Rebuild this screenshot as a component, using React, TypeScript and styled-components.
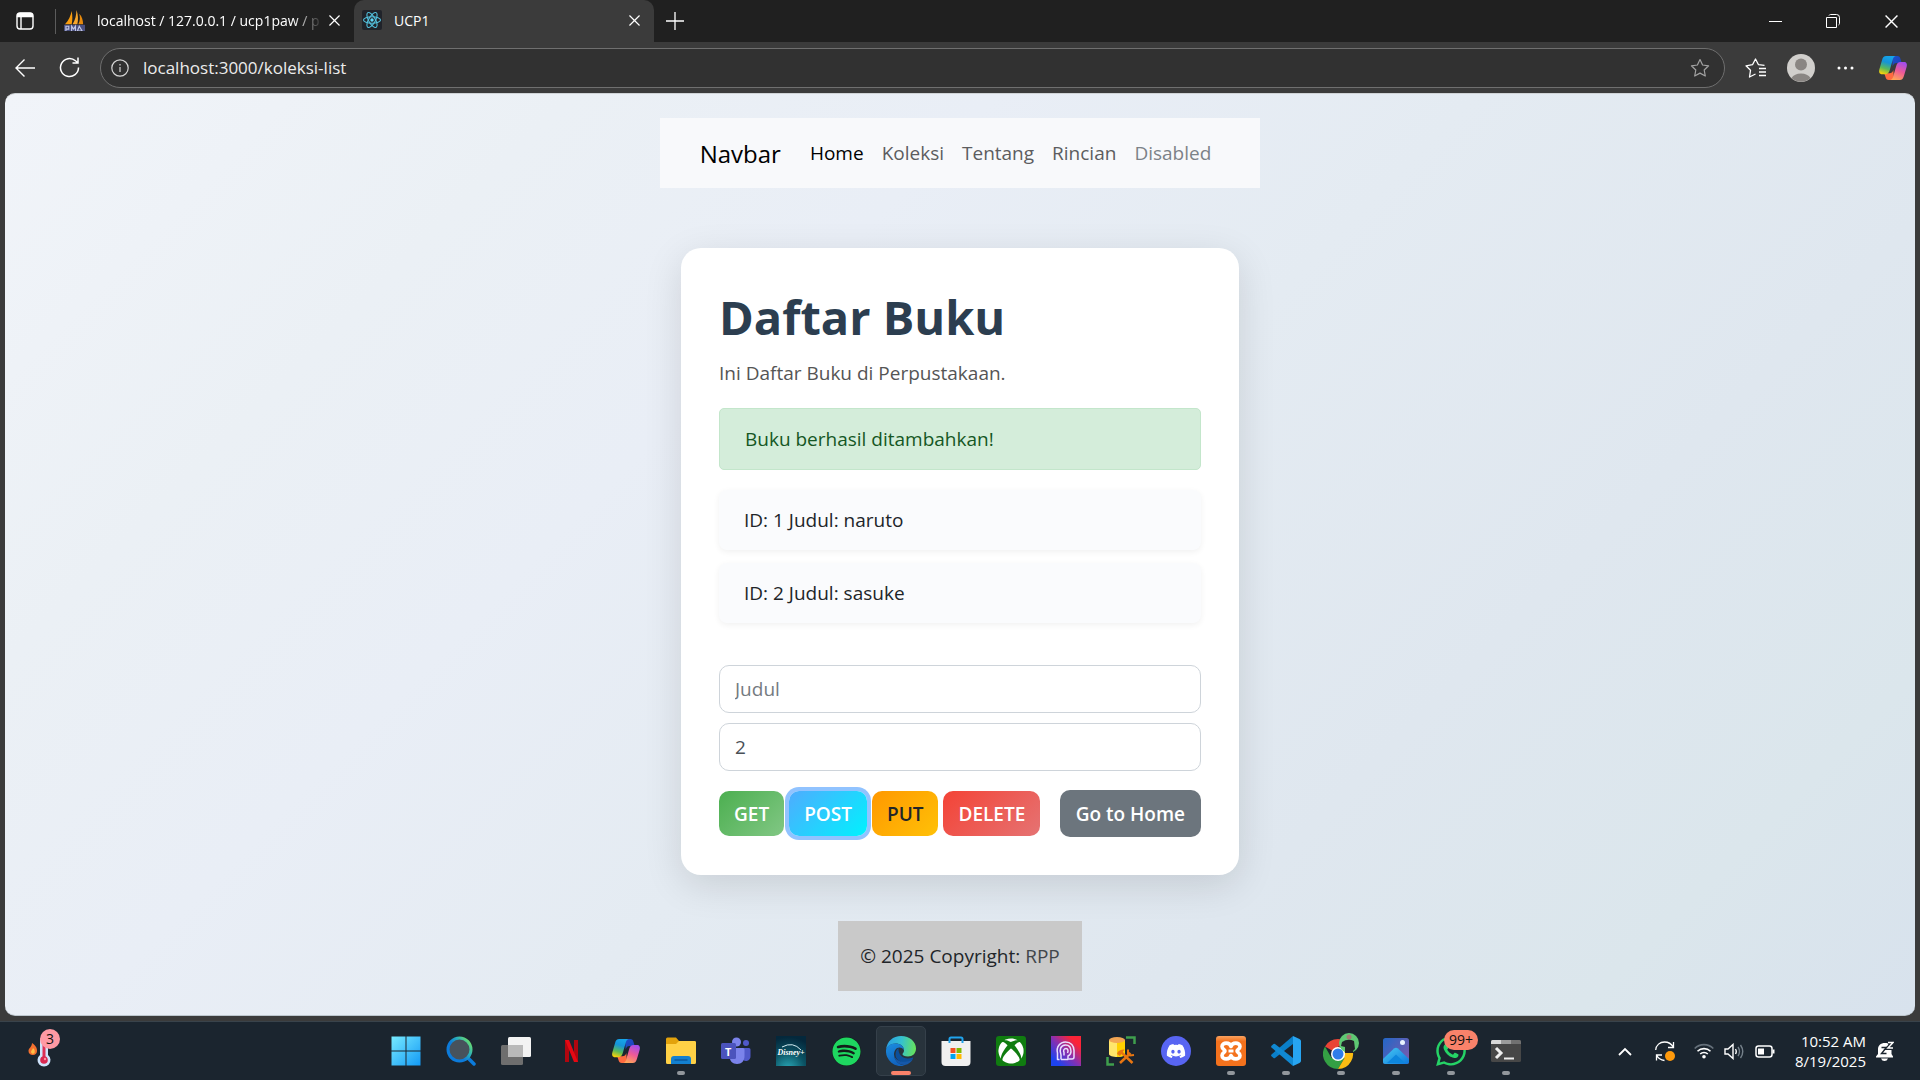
import React, { useId, useState } from "react";
import styled, { createGlobalStyle, css } from "styled-components";
import { FaSpotify, FaXbox, FaDiscord, FaWhatsapp } from "react-icons/fa";

const uiFont = `"Segoe UI", "Open Sans", "Noto Sans", sans-serif`;

const GlobalStyle = createGlobalStyle`
  *, *::before, *::after { box-sizing: border-box; }
  body { margin: 0; background: #3b3b3b; font-family: ${uiFont}; }
  button, input { font-family: inherit; }
  h1, p, ul { margin: 0; padding: 0; }
`;

/* ---------- browser window ---------- */

const Desktop = styled.div`
  min-height: 100vh;
  display: flex;
  flex-direction: column;
`;

const TabStrip = styled.header`
  display: flex;
  align-items: center;
  height: 42px;
  background: #202020;
  color: #fff;
`;

const PlainButton = styled.button`
  display: inline-flex;
  align-items: center;
  justify-content: center;
  padding: 0;
  border: 0;
  background: none;
  color: inherit;
  flex: none;
`;

const TabActions = styled(PlainButton)`
  width: 50px;
  height: 42px;
`;

const Divider = styled.span`
  width: 1px;
  height: 25px;
  margin-left: 5px;
  background: #5c5c5c;
`;

const Tab = styled.div<{ $active?: boolean }>`
  display: flex;
  align-items: center;
  gap: 4px;
  width: ${(p) => (p.$active ? 300 : 298)}px;
  height: 42px;
  padding: 0 10px 2px 8px;
  font-size: 14px;
  ${(p) =>
    p.$active &&
    css`
      background: #3b3b3b;
      border-radius: 10px 10px 0 0;
    `}
`;

const TabTitle = styled.span<{ $fade?: boolean }>`
  flex: 1;
  min-width: 0;
  margin-left: 8px;
  white-space: nowrap;
  ${(p) => p.$fade && "mask-image: linear-gradient(90deg, #000 88%, rgba(0, 0, 0, 0.1));"}
`;

const TabButton = styled(PlainButton)`
  width: 20px;
  height: 20px;
`;

const NewTab = styled(PlainButton)`
  width: 42px;
  height: 40px;
`;

const WindowControls = styled.div`
  display: flex;
  margin-left: auto;
`;

const WindowButton = styled(PlainButton)`
  width: 58px;
  height: 42px;
`;

const Toolbar = styled.div`
  display: flex;
  align-items: center;
  height: 51px;
  padding: 0 2px;
  background: #3b3b3b;
  color: #fff;
`;

const ToolButton = styled(PlainButton)<{ $wide?: boolean }>`
  width: ${(p) => (p.$wide ? 50 : 45)}px;
  height: 40px;
`;

const AddressBar = styled.label`
  display: flex;
  align-items: center;
  flex: 1;
  height: 40px;
  margin: 0 8px;
  padding: 0 14px 0 10px;
  gap: 14px;
  border: 1px solid #6f6f6f;
  border-radius: 20px;
  background: #313131;
`;

const AddressInput = styled.input`
  flex: 1;
  min-width: 0;
  padding: 0 0 1px;
  border: 0;
  outline: 0;
  background: none;
  color: #ececec;
  font-size: 17px;
`;

/* ---------- web page ---------- */

const Page = styled.div`
  flex: 1;
  display: flex;
  flex-direction: column;
  align-items: center;
  margin: 0 5px 5px;
  padding: 24px 20px;
  border-radius: 10px;
  border-top: 1px solid #cfd3d6;
  border-bottom: 1px solid #bcc6cd;
  background: linear-gradient(135deg, #f1f4f9 0%, #ebf0f5 20%, #e9eef6 35%, #e4ebf2 52%, #dfe7ef 72%, #dbe6ec 88%, #d8e2ed 100%);
  color: #212529;
`;

const Navbar = styled.nav`
  display: flex;
  align-items: center;
  height: 70px;
  padding: 0 40px;
  background: #f8f9fb;
`;

const Brand = styled.a`
  margin-right: 20px;
  color: #000;
  font-size: 24px;
  text-decoration: none;
`;

const NavItem = styled.a<{ $tone: "active" | "normal" | "muted" }>`
  padding: 10px 9px;
  font-size: 19px;
  line-height: 30px;
  text-decoration: none;
  color: ${(p) => ({ active: "#000", normal: "#5c5d5f", muted: "#7c8288" })[p.$tone]};
`;

const Card = styled.main`
  width: 558px;
  max-width: 100%;
  margin: 60px 0 46px;
  padding: 38px;
  border-radius: 20px;
  background: #fff;
  box-shadow: 0 10px 38px rgba(0, 0, 0, 0.12);
`;

const Title = styled.h1`
  margin-bottom: 10px;
  color: #2c3e50;
  font-size: 47px;
  font-weight: 700;
  line-height: 62px;
`;

const Lead = styled.p`
  color: #555;
  font-size: 19px;
  line-height: 30px;
`;

const Alert = styled.div`
  margin: 20px 0;
  padding: 15px 25px;
  border: 1px solid #c3e6cb;
  border-radius: 5px;
  background: #d4edda;
  color: #155724;
  font-size: 19px;
  line-height: 30px;
`;

const BookList = styled.ul`
  display: flex;
  flex-direction: column;
  gap: 13px;
  list-style: none;
`;

const Book = styled.li`
  padding: 15px 25px;
  border-radius: 8px;
  background: #fafbfd;
  box-shadow: 0 2px 6px rgba(0, 0, 0, 0.06);
  font-size: 19px;
  line-height: 30px;
`;

const Form = styled.form`
  display: flex;
  flex-direction: column;
  gap: 10px;
  margin-top: 42px;
`;

const TextField = styled.input`
  width: 100%;
  height: 48px;
  padding: 0 15px;
  border: 1px solid #ced4da;
  border-radius: 10px;
  background: #fff;
  color: #495057;
  font-size: 19px;
  &::placeholder {
    color: #757b81;
    opacity: 1;
  }
`;

const Actions = styled.div`
  display: flex;
  align-items: center;
  gap: 5px;
  margin-top: 9px;
`;

const ActionButton = styled.button<{ $fill: string; $dark?: boolean; $focus?: boolean; $last?: boolean }>`
  height: ${(p) => (p.$last ? 47 : 45)}px;
  margin-left: ${(p) => (p.$last ? "auto" : 0)};
  padding: 0 ${(p) => (p.$last ? 16 : 15)}px;
  border: 0;
  border-radius: 10px;
  background: ${(p) => p.$fill};
  color: ${(p) => (p.$dark ? "#212529" : "#fff")};
  font-size: 19px;
  font-weight: 600;
  white-space: nowrap;
  ${(p) => p.$focus && "box-shadow: 0 0 0 4px #91c3ff;"}
`;

const Footer = styled.footer`
  padding: 20px 22px;
  background: #c9c9c9;
  color: #212529;
  font-size: 19px;
  line-height: 30px;
  a {
    color: #41464b;
    text-decoration: none;
  }
`;

/* ---------- taskbar ---------- */

const Taskbar = styled.footer`
  display: grid;
  grid-template-columns: 1fr auto 1fr;
  align-items: center;
  height: 59px;
  padding-right: 8px;
  border-top: 1px solid #39434b;
  background: #1b252f;
  color: #fff;
`;

const Widgets = styled(PlainButton)`
  position: relative;
  justify-self: start;
  width: 36px;
  height: 44px;
  margin-left: 25px;
`;

const Count = styled.span<{ $wide?: boolean }>`
  position: absolute;
  top: ${(p) => (p.$wide ? 3 : 0)}px;
  right: ${(p) => (p.$wide ? -3 : 1)}px;
  min-width: 20px;
  height: 20px;
  padding: 0 ${(p) => (p.$wide ? 5 : 0)}px;
  border-radius: 10px;
  background: ${(p) => (p.$wide ? "#f9826a" : "#ff99a4")};
  color: #111;
  font-size: 14px;
  line-height: 20px;
  text-align: center;
`;

const Apps = styled.div`
  display: flex;
  gap: 5px;
`;

const AppButton = styled(PlainButton)<{ $state?: "open" | "active" }>`
  position: relative;
  width: 50px;
  height: 50px;
  border-radius: 5px;
  border: 1px solid ${(p) => (p.$state === "active" ? "#35404a" : "transparent")};
  ${(p) => p.$state === "active" && "background: #28333c;"}
  &::after {
    content: "";
    display: ${(p) => (p.$state ? "block" : "none")};
    position: absolute;
    bottom: 0;
    left: 50%;
    width: ${(p) => (p.$state === "active" ? 20 : 8)}px;
    height: 4px;
    border-radius: 2px;
    transform: translateX(-50%);
    background: ${(p) => (p.$state === "active" ? "#f9826a" : "#92979c")};
  }
`;

const Tray = styled.div`
  display: flex;
  align-items: center;
  justify-self: end;
  padding-right: 8px;
`;

const TrayButton = styled(PlainButton)<{ $w: number }>`
  width: ${(p) => p.$w}px;
  height: 44px;
`;

const Clock = styled.time`
  margin-left: 10px;
  font-size: 15px;
  line-height: 20px;
  text-align: right;
`;

/* ---------- drawings ---------- */

const Cross = ({ size = 11 }: { size?: number }) => (
  <svg width={size} height={size} viewBox="0 0 12 12" stroke="#fff" strokeWidth="1.3" fill="none">
    <path d="M.5.5l11 11M11.5.5l-11 11" />
  </svg>
);

const TabActionsIcon = () => (
  <svg width="18" height="18" viewBox="0 0 18 18" fill="none" stroke="#fff" strokeWidth="1.4">
    <rect x="1" y="1" width="16" height="16" rx="3" />
    <path d="M1.5 4.5V4A2.5 2.5 0 0 1 4 1.500h10A2.500 2.500 0 0 1 16.500 4v.5z" fill="#fff" />
    <path d="M5 5v12" />
  </svg>
);

const SailIcon = () => (
  <svg width="21" height="21" viewBox="0 0 22 22">
    <path d="M8 1c1 5 1 10 0 14H1C5 11 7 6 8 1z" fill="#f89c0e" />
    <path d="M13 0c2 5 2 10 1 15H9c3-5 4-10 4-15z" fill="#f7a62c" />
    <path d="M16 4c3 3 4 7 4 11h-5c2-4 2-7 1-11z" fill="#e6890c" />
    <path d="M0 15.500h22v6.500H0z" fill="#4a5080" />
    <path d="M2 22v-5h3v3H2M8 22v-5l2 3 2-3v5M14 22l2-5 3 5z" fill="none" stroke="#c3c8e6" strokeWidth="1.2" />
  </svg>
);

const ReactFavicon = () => (
  <svg width="20" height="20" viewBox="0 0 20 20">
    <rect width="20" height="20" rx="2" fill="#20232a" />
    <g fill="none" stroke="#53c1de" strokeWidth="1.1">
      <ellipse cx="10" cy="10" rx="8.500" ry="3.300" />
      <ellipse cx="10" cy="10" rx="8.500" ry="3.300" transform="rotate(60 10 10)" />
      <ellipse cx="10" cy="10" rx="8.500" ry="3.300" transform="rotate(120 10 10)" />
    </g>
    <circle cx="10" cy="10" r="1.700" fill="#61dafb" />
  </svg>
);

const CopilotIcon = ({ size = 30 }: { size?: number }) => {
  const id = useId();
  return (
    <svg width={size} height={size} viewBox="0 0 30 30">
      <defs>
        <linearGradient id={`${id}a`} x1="0.600" y1="0" x2="0.300" y2="1">
          <stop stopColor="#16a5ea" />
          <stop offset="0.350" stopColor="#1593d8" />
          <stop offset="0.700" stopColor="#5cba58" />
          <stop offset="1" stopColor="#f5d10c" />
        </linearGradient>
        <linearGradient id={`${id}b`} x1="0.700" y1="0" x2="0.300" y2="1">
          <stop stopColor="#a24dec" />
          <stop offset="0.500" stopColor="#ee5a96" />
          <stop offset="1" stopColor="#ffa657" />
        </linearGradient>
        <linearGradient id={`${id}c`} x1="0" y1="0" x2="1" y2="1">
          <stop stopColor="#1d50c8" />
          <stop offset="1" stopColor="#1c3fb8" />
        </linearGradient>
      </defs>
      <path d="M14 3h5.200c2 0 2.800 1.300 3.300 3l.8 2.800c.3.900.9 1.300 1.900 1.300h-6.500c-2.200 0-3.300 1.200-4 3.300z" fill={`url(#${id}c)`} />
      <path d="M16 27h-5.200c-2 0-2.800-1.300-3.300-3l-.8-2.400c-.3-1-.9-1.400-1.900-1.400h6.500c2.200 0 3.300-1.200 4-3.300z" fill="#ff6b40" />
      <path d="M8.300 3h9.400c-1.700.4-2.400 1.800-2.900 3.500l-3.100 10.700c-.7 2.200-1.700 4-4.400 4H4.200C1.400 21.200.6 19 1.400 16.200l2.600-9C4.800 4.400 5.800 3 8.300 3z" fill={`url(#${id}a)`} />
      <path d="M21.700 27h-9.400c1.700-.4 2.400-1.800 2.900-3.500l3.100-10.700c.7-2.200 1.700-3.700 4.400-3.700h3.100c2.800 0 3.600 2.100 2.800 4.900l-2.600 8.800c-.8 2.800-1.800 4.200-4.300 4.200z" fill={`url(#${id}b)`} />
    </svg>
  );
};

const starPath = "M10 1.500l2.600 5.500 6 .8-4.400 4.200 1.100 6L10 15.100 4.700 18l1.100-6L1.400 7.800l6-.8z";

const WindowsIcon = () => (
  <svg width="30" height="30" viewBox="0 0 30 30">
    <defs>
      <linearGradient id="win" gradientUnits="userSpaceOnUse" x1="0" y1="0" x2="30" y2="30">
        <stop stopColor="#79ecff" />
        <stop offset="1" stopColor="#1198f5" />
      </linearGradient>
    </defs>
    <path d="M.5.5h14v14H.5zM15.500.5h14v14h-14zM.5 15.500h14v14H.5zM15.500 15.500h14v14h-14z" fill="url(#win)" />
  </svg>
);

const SearchIcon = () => (
  <svg width="30" height="30" viewBox="0 0 30 30">
    <defs>
      <linearGradient id="lens" x1="0" y1="0.800" x2="0.900" y2="0.100">
        <stop offset="0.400" stopColor="#0c7bdb" />
        <stop offset="0.700" stopColor="#2bafba" />
        <stop offset="1" stopColor="#67dc72" />
      </linearGradient>
    </defs>
    <path d="M22 22l6 6" stroke="#0c7bdb" strokeWidth="3.500" strokeLinecap="round" />
    <circle cx="13.500" cy="13.500" r="11.500" fill="#47525c" stroke="url(#lens)" strokeWidth="3" />
  </svg>
);

const TaskViewIcon = () => (
  <svg width="30" height="30" viewBox="0 0 30 30">
    <rect x="0" y="9" width="22" height="20" rx="1.500" fill="#6e6e6e" />
    <rect x="7" y="1" width="23" height="20" rx="1.500" fill="#f3f3f3" />
    <path d="M7 9h15v12H8.500A1.500 1.500 0 0 1 7 19.500z" fill="#b9b9b9" />
  </svg>
);

const NetflixIcon = () => (
  <svg width="13" height="22" viewBox="0 0 13 22">
    <path d="M0 0h4v22H0zM9 0h4v22H9z" fill="#b1060f" />
    <path d="M0 0h4l9 22H9z" fill="#e50914" />
  </svg>
);

const FolderIcon = () => (
  <svg width="30" height="28" viewBox="0 0 30 28">
    <path d="M0 2Q0 .5 1.500.5H10l3 3.500h15.500Q30 4 30 5.500V12H0z" fill="#e2a20c" />
    <path d="M0 7h10l3-3h15.500Q30 4 30 5.500V25.500Q30 27 28.500 27h-27Q0 27 0 25.500z" fill="#ffd146" />
    <path d="M5 27v-5q0-3 3-3h14q3 0 3 3v5z" fill="#1380d0" />
    <path d="M8.500 23h13" stroke="#0b5296" strokeWidth="1.300" />
  </svg>
);

const TeamsLetter = styled.span`
  position: absolute;
  left: 13px;
  top: 17px;
  font-size: 11px;
  font-weight: 700;
  line-height: 15px;
  color: #fff;
`;

const TeamsIcon = () => (
  <>
    <svg width="30" height="28" viewBox="0 0 30 28">
      <circle cx="25" cy="6" r="3" fill="#5059c9" />
      <path d="M20 11h8q1.500 0 1.500 1.500V19a4.500 4.500 0 0 1-9 1z" fill="#5059c9" />
      <circle cx="15.500" cy="5" r="4.500" fill="#7b83eb" />
      <path d="M9 11h13q1.500 0 1.500 1.500V19c0 5-3 8-7.500 8s-7.500-3-7.500-8z" fill="#7b83eb" />
      <rect x="0" y="6" width="15" height="16" rx="1.500" fill="#4b53bc" />
    </svg>
    <TeamsLetter>T</TeamsLetter>
  </>
);

const DisneyTile = styled.span`
  position: relative;
  display: flex;
  align-items: center;
  justify-content: center;
  width: 30px;
  height: 30px;
  padding-top: 3px;
  background: radial-gradient(circle at 40% 110%, #2aa9b8, #0b5364 45%, #04283c 85%);
  color: #fff;
  font: italic 700 8px "Liberation Serif", serif;
  svg {
    position: absolute;
    top: 7px;
    left: 5px;
  }
`;

const SpotifyTile = styled.span`
  display: flex;
  border-radius: 50%;
  background: #141d1a;
  color: #1ed760;
`;

const EdgeIcon = () => (
  <svg width="30" height="30" viewBox="0 0 30 30">
    <defs>
      <linearGradient id="edgeTop" x1="0" y1="0.400" x2="1" y2="0.500">
        <stop stopColor="#2a9fe3" />
        <stop offset="0.500" stopColor="#35c1cf" />
        <stop offset="1" stopColor="#67e35a" />
      </linearGradient>
      <linearGradient id="edgeLeft" x1="0" y1="0" x2="0.400" y2="1">
        <stop stopColor="#1b8ee0" />
        <stop offset="1" stopColor="#1162bd" />
      </linearGradient>
    </defs>
    <path d="M0 14C1 5 7 0 15 0c9 0 15 6 15 12.500 0 5-3.500 8-8 8-3.500 0-5.500-1.200-5.500-2.300 0-.9 1.500-1.400 1.500-3.700C18 10 14 7.500 9.500 7.500 4.500 7.500 1 10.500 0 14z" fill="url(#edgeTop)" />
    <path d="M0 14c1-4 4.500-6.500 9.500-6.500 4.500 0 8.500 2.500 8.500 7 0 0-1-3-4.500-3S8 15 8 18.500C8 25 14 29.500 19 29.500A15 15 0 0 1 0 14z" fill="url(#edgeLeft)" />
    <path d="M12.500 12c-2 1.500-3 3.500-3 6.500 0 5 5 8.500 10 8 3.500-.4 6.500-2.500 7.500-4 .5-.8 0-1.200-.8-.8C19 24 12 20.500 12.500 12z" fill="#0c4f9a" />
    <path d="M8 18.500c0 6 5 11 11 10.500 3.500-.7 6.500-3 8-6-5 4.500-18 4-19-4.500z" fill="#1558a9" />
  </svg>
);

const StoreIcon = () => (
  <svg width="30" height="30" viewBox="0 0 30 30">
    <path d="M8.500 8V3q0-1.500 1.500-1.500h10q1.500 0 1.500 1.500v5" fill="none" stroke="#20a4ee" strokeWidth="2" />
    <path d="M.5 5h29v21q0 4-4 4h-21q-4 0-4-4z" fill="#f0f0f0" />
    <path d="M8.500 7V5M21.500 7V5" stroke="#20a4ee" strokeWidth="2" />
    <path d="M9.500 12h5v5h-5z" fill="#f25022" />
    <path d="M15.500 12h5v5h-5z" fill="#7fba00" />
    <path d="M9.500 18h5v5h-5z" fill="#00a4ef" />
    <path d="M15.500 18h5v5h-5z" fill="#ffb900" />
  </svg>
);

const XboxTile = styled.span`
  display: flex;
  align-items: center;
  justify-content: center;
  width: 30px;
  height: 30px;
  border-radius: 3px;
  background: #107c10;
  color: #fff;
`;

const HeadIcon = () => (
  <svg width="30" height="30" viewBox="0 0 30 30">
    <defs>
      <linearGradient id="head" x1="0" y1="1" x2="1" y2="0">
        <stop offset="0.150" stopColor="#1d43f0" />
        <stop offset="0.500" stopColor="#8b2fae" />
        <stop offset="0.800" stopColor="#fb2438" />
      </linearGradient>
    </defs>
    <path d="M0 0h30v30H0z" fill="url(#head)" />
    <g fill="none" stroke="#e9e0ff" strokeWidth="1.500" strokeLinejoin="round">
      <path d="M8.500 23.500h-2V17C5 11 9 6 14.500 6S23 10 23 14.500V21q0 2-2 2h-3.500" />
      <path d="M10 23.500V19C8 14 9.500 9 14.500 9S20 13 20 15.500 19 19 17 20v3.500H10" />
      <path d="M13 19.500v-3c-1-2 0-4 2-4s2.500 2.500 1.500 4.500" />
    </g>
  </svg>
);

const DatabaseIcon = () => (
  <svg width="30" height="30" viewBox="0 0 30 30">
    <path d="M20 1.500h8.500V8M1.500 21v7.500H8" fill="none" stroke="#3f9f4d" strokeWidth="2.500" />
    <path d="M3 4v14c0 2 4 3 8 3s8-1 8-3V4z" fill="#ffe66b" />
    <path d="M11 4v17c4 0 8-1 8-3V4z" fill="#ffd000" />
    <ellipse cx="11" cy="4" rx="8" ry="3" fill="#f2a654" />
    <path d="M15 16l11.500 11M24.500 17L14 27" stroke="#e97611" strokeWidth="2.500" />
    <path d="M11 18c1-3.500 4-4.500 7.500-4.500L14 20z" fill="#e97611" />
    <path d="M22 13.500v4l2 2 4-.5" fill="none" stroke="#e97611" strokeWidth="2" />
  </svg>
);

const DiscordTile = styled.span`
  display: flex;
  align-items: center;
  justify-content: center;
  width: 30px;
  height: 30px;
  border-radius: 50%;
  background: #5865f2;
  color: #fff;
`;

const XamppTile = styled.span`
  display: flex;
  align-items: center;
  justify-content: center;
  width: 30px;
  height: 30px;
  border-radius: 3px;
  background: linear-gradient(#f9a260, #f4721d 18%);
`;

const XamppGlyph = () => (
  <svg width="24" height="20" viewBox="0 0 24 20" fill="none" stroke="#fff" strokeWidth="3.600" strokeLinejoin="round">
    <path d="M12 5.500C11 1 3 1 3 5.500 3 8.500 6 8.500 6 10s-3 1.500-3 4.500c0 4.500 8 4.500 9 0 1 4.500 9 4.500 9 0 0-3-3-3-3-4.500s3-1.500 3-4.500c0-4.500-8-4.500-9 0z" />
    <path d="M9.500 10h5" strokeWidth="3" />
  </svg>
);

const VsCodeIcon = () => (
  <svg width="30" height="30" viewBox="0 0 30 30">
    <path d="M22 0v8L4 22q-.8.600-1.500 0l-2-1.800q-.8-.8 0-1.600z" fill="#0a7fc9" />
    <path d="M22 30v-8L4 8q-.8-.600-1.500 0l-2 1.800q-.8.800 0 1.600z" fill="#1089d3" />
    <path d="M22 0l6.500 3Q30 3.800 30 5v20q0 1.200-1.500 2L22 30z" fill="#27a5f2" />
  </svg>
);

const ChromeIcon = () => (
  <svg width="36" height="36" viewBox="0 0 36 36">
    <path d="M15 21L2 13.500A15 15 0 0 1 28 13.500H15z" fill="#ea4335" />
    <path d="M15 21l6.500 4-6.500 11A15 15 0 0 1 2 13.500L8.500 25z" fill="#34a044" />
    <path d="M15 21l13-7.500A15 15 0 0 1 15 36l6.500-11z" fill="#fbbc12" />
    <circle cx="15" cy="21" r="7" fill="#fff" />
    <circle cx="15" cy="21" r="5.500" fill="#2f7de9" />
    <circle cx="26" cy="10" r="10" fill="#5fc873" />
    <circle cx="26" cy="4" r="2.500" fill="#a57873" />
    <path d="M19 9q6-4 12-1l1 8-2 2v2h-8v-6l-4-1z" fill="#22232a" />
  </svg>
);

const PhotosIcon = () => (
  <svg width="26" height="26" viewBox="0 0 26 26">
    <defs>
      <linearGradient id="photoSky" x1="0" y1="0" x2="1" y2="0.700">
        <stop stopColor="#2267c8" />
        <stop offset="1" stopColor="#755cad" />
      </linearGradient>
      <linearGradient id="photoHill" x1="0" y1="0" x2="1" y2="1">
        <stop stopColor="#46cbf4" />
        <stop offset="1" stopColor="#0e77dc" />
      </linearGradient>
    </defs>
    <rect width="26" height="26" rx="2.500" fill="url(#photoSky)" />
    <path d="M0 21L11 10.500q2-1.500 4 0L26 21v2.500q0 2.500-2.500 2.500h-21Q0 26 0 23.500z" fill="url(#photoHill)" />
    <path d="M4 25l9-8.500 9 8.500z" fill="#0d86dd" />
    <circle cx="19.500" cy="4.500" r="2.500" fill="#e9f3ff" />
  </svg>
);

const TerminalIcon = () => (
  <svg width="30" height="22" viewBox="0 0 30 22">
    <rect width="30" height="22" rx="1.500" fill="#474747" />
    <path d="M0 4V1.500Q0 0 1.500 0H10v4z" fill="#d8d8d8" />
    <path d="M10 0h10v4H10z" fill="#9c9c9c" />
    <path d="M20 0h8.500Q30 0 30 1.500V4H20z" fill="#717171" />
    <path d="M5 8l5 5-5 5" fill="none" stroke="#eee" strokeWidth="3" />
    <path d="M13 18.500h10" stroke="#eee" strokeWidth="2" />
  </svg>
);

const ThermometerIcon = () => (
  <svg width="36" height="40" viewBox="0 0 36 40">
    <path d="M7 12c4 3 5 5 5 7.500A4 4 0 0 1 8 24a4 4 0 0 1-4.500-4c0-3 3.500-4 3.500-8z" fill="#f4702f" />
    <path d="M8 17c2 2 2 3 1.500 5a2 2 0 0 1-3.500-1c0-1.500 1.500-2 2-4z" fill="#ffc247" />
    <path d="M15 9q0-3 4-3t4 3v15a6.500 6.500 0 1 1-8 0z" fill="#cfe3fb" />
    <path d="M19 9v17" stroke="#dc3055" strokeWidth="3" />
    <circle cx="19" cy="29" r="3.800" fill="#d92850" />
    <circle cx="20" cy="28" r="1.200" fill="#ff8da0" />
  </svg>
);

const BellIcon = () => (
  <svg width="18" height="20" viewBox="0 0 18 20">
    <path d="M2 8.500C2 4.500 4.500 2 9 2s6.500 2.500 6.500 6.500v4.500l1.500 2.500v1H0v-1L2 13zM5 17.500h7q-1 2.500-3.500 2.500T5 17.500z" fill="#fff" />
    <path d="M5.500 6.500h5L5.500 12.500h5" fill="none" stroke="#1b252f" strokeWidth="1.400" />
    <path d="M12 1.500h5l-5 5.500h5" fill="none" stroke="#1b252f" strokeWidth="4" />
    <path d="M12 1.500h5l-5 5.500h5" fill="none" stroke="#fff" strokeWidth="1.500" />
  </svg>
);

const apps: { name: string; icon: React.ReactNode; state?: "open" | "active"; count?: string }[] = [
  { name: "Start", icon: <WindowsIcon /> },
  { name: "Search", icon: <SearchIcon /> },
  { name: "Task view", icon: <TaskViewIcon /> },
  { name: "Netflix", icon: <NetflixIcon /> },
  { name: "Copilot", icon: <CopilotIcon /> },
  { name: "File Explorer", icon: <FolderIcon />, state: "open" },
  { name: "Teams", icon: <TeamsIcon /> },
  {
    name: "Disney",
    icon: (
      <DisneyTile>
        <svg width="22" height="8" viewBox="0 0 22 8" fill="none" stroke="#d5eef4" strokeWidth="1"><path d="M1 4Q12-2 20 7" /></svg>
        Disney+
      </DisneyTile>
    ),
  },
  { name: "Spotify", icon: <SpotifyTile><FaSpotify size={29} /></SpotifyTile> },
  { name: "Edge", icon: <EdgeIcon />, state: "active" },
  { name: "Store", icon: <StoreIcon /> },
  { name: "Xbox", icon: <XboxTile><FaXbox size={26} /></XboxTile> },
  { name: "Assistant", icon: <HeadIcon /> },
  { name: "Database tools", icon: <DatabaseIcon /> },
  { name: "Discord", icon: <DiscordTile><FaDiscord size={20} /></DiscordTile> },
  { name: "XAMPP", icon: <XamppTile><XamppGlyph /></XamppTile>, state: "open" },
  { name: "Visual Studio Code", icon: <VsCodeIcon />, state: "open" },
  { name: "Chrome", icon: <ChromeIcon />, state: "open" },
  { name: "Photos", icon: <PhotosIcon />, state: "open" },
  { name: "WhatsApp", icon: <FaWhatsapp size={34} color="#25d366" />, state: "open", count: "99+" },
  { name: "Terminal", icon: <TerminalIcon />, state: "open" },
];

const books = [
  { id: 1, judul: "naruto" },
  { id: 2, judul: "sasuke" },
];

export default function App() {
  const [url, setUrl] = useState("localhost:3000/koleksi-list");
  const [judul, setJudul] = useState("");
  const [bookId, setBookId] = useState("2");

  return (
    <>
      <GlobalStyle />
      <Desktop>
        <TabStrip>
          <TabActions aria-label="Tab actions"><TabActionsIcon /></TabActions>
          <Divider />
          <Tab>
            <SailIcon />
            <TabTitle $fade>localhost / 127.0.0.1 / ucp1paw / p</TabTitle>
            <TabButton aria-label="Close tab"><Cross /></TabButton>
          </Tab>
          <Tab $active>
            <ReactFavicon />
            <TabTitle>UCP1</TabTitle>
            <TabButton aria-label="Close tab"><Cross /></TabButton>
          </Tab>
          <NewTab aria-label="New tab">
            <svg width="18" height="18" viewBox="0 0 18 18" stroke="#fff" strokeWidth="1.300"><path d="M9 0v18M0 9h18" /></svg>
          </NewTab>
          <WindowControls>
            <WindowButton aria-label="Minimize">
              <svg width="13" height="13" viewBox="0 0 13 13" stroke="#fff"><path d="M0 6.500h13" /></svg>
            </WindowButton>
            <WindowButton aria-label="Restore">
              <svg width="14" height="14" viewBox="0 0 14 14" stroke="#fff" fill="none"><path d="M.5 3.500h10v10H.5zM3 1.500q.5-1 1.500-1h6q3 0 3 3v6q0 1-1 1.500" /></svg>
            </WindowButton>
            <WindowButton aria-label="Close"><Cross size={13} /></WindowButton>
          </WindowControls>
        </TabStrip>

        <Toolbar>
          <ToolButton aria-label="Back">
            <svg width="20" height="18" viewBox="0 0 20 18" stroke="#fff" strokeWidth="1.400" fill="none"><path d="M20 9H1M9.500.5L1 9l8.500 8.500" /></svg>
          </ToolButton>
          <ToolButton aria-label="Refresh">
            <svg width="21" height="21" viewBox="0 0 21 21" stroke="#fff" strokeWidth="1.500" fill="none"><path d="M19.500 10.500a9 9 0 1 1-3-6.700l2 1.700M19 .5v5.500h-5.500" /></svg>
          </ToolButton>
          <AddressBar>
            <svg width="18" height="18" viewBox="0 0 18 18" stroke="#d5d5d5" strokeWidth="1.200" fill="none"><circle cx="9" cy="9" r="8.200" /><path d="M9 8v5M9 5v1.500" /></svg>
            <AddressInput aria-label="Address" value={url} onChange={(e) => setUrl(e.target.value)} />
            <svg width="20" height="20" viewBox="0 0 20 20" stroke="#a3a3a3" strokeWidth="1.200" fill="none" strokeLinejoin="round"><path d={starPath} /></svg>
          </AddressBar>
          <ToolButton aria-label="Favorites">
            <svg width="21" height="20" viewBox="0 0 21 20" stroke="#fff" strokeWidth="1.300" fill="none" strokeLinejoin="round"><path d="M19.500 7.300l-6-.6L10.500 1 7.500 6.700 1 7.800l4.500 4.500L4.500 19l6-3M14 10.500h7M14 14h7M14 17.500h7" /></svg>
          </ToolButton>
          <ToolButton aria-label="Profile">
            <svg width="28" height="28" viewBox="0 0 28 28"><circle cx="14" cy="14" r="14" fill="#d1cfcc" /><circle cx="14" cy="10.500" r="6" fill="#8a8683" /><path d="M4.500 24a10.500 8 0 0 1 19 0 14 14 0 0 1-19 0z" fill="#8a8683" /></svg>
          </ToolButton>
          <ToolButton aria-label="Settings and more">
            <svg width="17" height="4" viewBox="0 0 17 4" fill="#fff"><circle cx="2" cy="2" r="1.500" /><circle cx="8.500" cy="2" r="1.500" /><circle cx="15" cy="2" r="1.500" /></svg>
          </ToolButton>
          <ToolButton $wide aria-label="Copilot"><CopilotIcon /></ToolButton>
        </Toolbar>

        <Page>
          <Navbar>
            <Brand href="#">Navbar</Brand>
            <NavItem href="#" $tone="active">Home</NavItem>
            <NavItem href="#" $tone="normal">Koleksi</NavItem>
            <NavItem href="#" $tone="normal">Tentang</NavItem>
            <NavItem href="#" $tone="normal">Rincian</NavItem>
            <NavItem href="#" $tone="muted" aria-disabled="true">Disabled</NavItem>
          </Navbar>

          <Card>
            <Title>Daftar Buku</Title>
            <Lead>Ini Daftar Buku di Perpustakaan.</Lead>
            <Alert role="alert">Buku berhasil ditambahkan!</Alert>
            <BookList>
              {books.map((book) => (
                <Book key={book.id}>{`ID: ${book.id} Judul: ${book.judul}`}</Book>
              ))}
            </BookList>
            <Form onSubmit={(e) => e.preventDefault()}>
              <TextField aria-label="Judul" placeholder="Judul" value={judul} onChange={(e) => setJudul(e.target.value)} />
              <TextField aria-label="ID" value={bookId} onChange={(e) => setBookId(e.target.value)} />
              <Actions>
                <ActionButton type="button" $fill="linear-gradient(135deg, #4caf50, #81c784)">GET</ActionButton>
                <ActionButton type="button" $fill="linear-gradient(135deg, #4facfe, #00f2fe)" $focus>POST</ActionButton>
                <ActionButton type="button" $fill="linear-gradient(135deg, #ff9800, #ffc107)" $dark>PUT</ActionButton>
                <ActionButton type="button" $fill="linear-gradient(135deg, #f44336, #e57373)">DELETE</ActionButton>
                <ActionButton type="button" $fill="#6c757d" $last>Go to Home</ActionButton>
              </Actions>
            </Form>
          </Card>

          <Footer>
            © 2025 Copyright: <a href="#">RPP</a>
          </Footer>
        </Page>

        <Taskbar>
          <Widgets aria-label="Widgets">
            <ThermometerIcon />
            <Count>3</Count>
          </Widgets>
          <Apps>
            {apps.map((app) => (
              <AppButton key={app.name} aria-label={app.name} $state={app.state}>
                {app.icon}
                {app.count && <Count $wide>{app.count}</Count>}
              </AppButton>
            ))}
          </Apps>
          <Tray>
            <TrayButton $w={40} aria-label="Hidden icons">
              <svg width="14" height="9" viewBox="0 0 14 9" stroke="#fff" strokeWidth="1.800" fill="none"><path d="M1 8l6-6 6 6" /></svg>
            </TrayButton>
            <TrayButton $w={40} aria-label="Updates">
              <svg width="20" height="22" viewBox="0 0 20 22" stroke="#fff" strokeWidth="1.300" fill="none"><path d="M.7 10C1 5 5 2 9.500 2c4 0 7 2 8.800 5M18.500 2v5.500H13M1.500 20.500V15H7M1.500 15c1.500 3 4 5 8 5.500" /><circle cx="15" cy="16" r="5" fill="#ff9a0c" stroke="none" /></svg>
            </TrayButton>
            <TrayButton $w={38} aria-label="Network">
              <svg width="20" height="16" viewBox="0 0 20 16" stroke="#fff" strokeWidth="1.600" fill="none"><path d="M.7 5.500a13 13 0 0 1 18.600 0" stroke="#65707a" /><path d="M3.500 8.300a9.200 9.200 0 0 1 13 0M6.200 11a5.400 5.400 0 0 1 7.600 0" /><circle cx="10" cy="13.700" r="1.800" fill="#fff" stroke="none" /></svg>
            </TrayButton>
            <TrayButton $w={22} aria-label="Volume">
              <svg width="20" height="17" viewBox="0 0 20 17" stroke="#fff" strokeWidth="1.400" fill="none"><path d="M1 6h3l5-4.500v14L4 11H1zM11.500 6q1.500 2.500 0 5" /><path d="M14 4q3 4.500 0 9M16.500 2q4.500 6.500 0 13" stroke="#75808a" /></svg>
            </TrayButton>
            <TrayButton $w={40} aria-label="Battery">
              <svg width="20" height="13" viewBox="0 0 20 13" stroke="#fff" strokeWidth="1.500" fill="none"><rect x="1" y="1" width="16" height="11" rx="2.500" /><path d="M3 3.500h6v6H3z" fill="#fff" stroke="none" /><path d="M18.500 4.500v4" strokeWidth="2" /></svg>
            </TrayButton>
            <Clock>10:52 AM<br />8/19/2025</Clock>
            <TrayButton $w={38} aria-label="Notifications"><BellIcon /></TrayButton>
          </Tray>
        </Taskbar>
      </Desktop>
    </>
  );
}
